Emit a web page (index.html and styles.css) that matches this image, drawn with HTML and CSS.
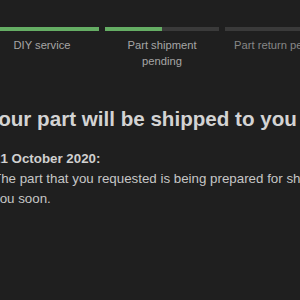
FILE: index.html
```html
<!DOCTYPE html>
<html lang="en">
<head>
<meta charset="utf-8">
<title>Repair status</title>
<link rel="stylesheet" href="styles.css">
</head>
<body>
<div class="page">
  <ol class="steps">
    <li class="step">
      <div class="bar"><span class="fill" style="width:100%"></span></div>
      <span class="label">DIY service</span>
    </li>
    <li class="step">
      <div class="bar"><span class="fill" style="width:50%"></span></div>
      <span class="label">Part shipment pending</span>
    </li>
    <li class="step upcoming">
      <div class="bar"><span class="fill" style="width:0%"></span></div>
      <span class="label">Part return pending</span>
    </li>
  </ol>
  <section class="status">
    <h1 class="title">Your part will be shipped to you</h1>
    <p class="date">21 October 2020:</p>
    <p class="message">The part that you requested is being prepared for shipment and will be sent to you soon.</p>
  </section>
</div>
</body>
</html>
```
FILE: styles.css
```css
html, body {
  margin: 0;
  padding: 0;
  overflow: hidden;
  background: #1f1f1f;
}
body {
  font-family: "Liberation Sans", Arial, Helvetica, sans-serif;
  width: 300px;
  height: 300px;
}
.page {
  margin-left: -15px;
  width: 480px;
}
.steps {
  list-style: none;
  margin: 0;
  padding: 27px 0 0 0;
  display: grid;
  grid-template-columns: repeat(3, 114px);
  column-gap: 6px;
}
.step {
  display: flex;
  flex-direction: column;
}
.bar {
  height: 4px;
  background: #3a3a3a;
  display: flex;
}
.fill {
  display: block;
  height: 100%;
  background: #65ad64;
}
.label {
  margin-top: 6px;
  padding: 0 6px;
  text-align: center;
  font-size: 11.2px;
  line-height: 16px;
  color: #a6a6a6;
}
.upcoming .label {
  color: #878787;
}
.status {
  padding-left: 8px;
  width: 470px;
}
.title {
  margin: 38px 0 0 -7px;
  font-size: 20.6px;
  line-height: 24px;
  font-weight: bold;
  color: #d3d3d3;
  white-space: nowrap;
}
.date {
  margin: 18px 0 0 0;
  font-size: 13.33px;
  line-height: 20px;
  font-weight: bold;
  color: #d0d0d0;
}
.message {
  margin: 0;
  font-size: 13.33px;
  line-height: 20px;
  color: #c6c6c6;
}
```
